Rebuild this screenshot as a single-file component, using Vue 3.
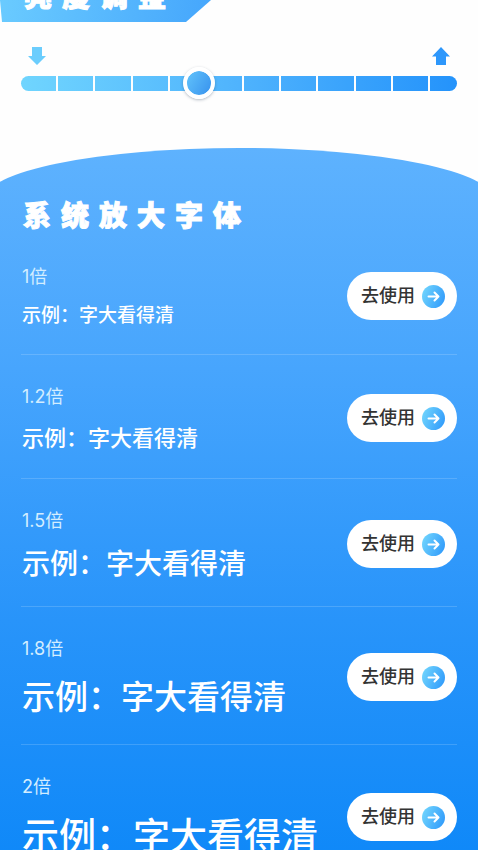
<script setup>
import { ref } from 'vue'

const brightness = ref(40)

const scales = [
  { id: 'x10', label: '1倍' },
  { id: 'x12', label: '1.2倍' },
  { id: 'x15', label: '1.5倍' },
  { id: 'x18', label: '1.8倍' },
  { id: 'x20', label: '2倍' }
]
</script>

<template>
  <main class="page">
    <header class="tab">
      <h2 id="brightness-title" class="heading">亮度调整</h2>
    </header>

    <section class="brightness">
      <div class="arrows">
        <svg class="arrow down" viewBox="0 0 18 18" aria-hidden="true">
          <path d="M4 0h10v9h4L9 18 0 9h4z" />
        </svg>
        <svg class="arrow up" viewBox="0 0 18 18" aria-hidden="true">
          <path d="M4 18h10V9.500h4L9 0 0 9.500h4z" />
        </svg>
      </div>
      <div class="slider">
        <div class="segments">
          <span v-for="n in 12" :key="n" class="segment"></span>
        </div>
        <input
          v-model="brightness"
          class="range"
          type="range"
          min="0"
          max="100"
          aria-labelledby="brightness-title"
        />
      </div>
    </section>

    <section class="panel">
      <h2 class="heading">系统放大字体</h2>
      <ul class="list">
        <li v-for="scale in scales" :key="scale.id" class="row">
          <div class="info">
            <span class="label">{{ scale.label }}</span>
            <span class="sample" :class="scale.id">示例：字大看得清</span>
          </div>
          <button class="use" type="button">
            <span>去使用</span>
            <svg class="go" viewBox="0 0 23 23" aria-hidden="true">
              <defs>
                <linearGradient :id="'go-' + scale.id" x1="0" y1="0.3" x2="1" y2="0.7">
                  <stop offset="0" stop-color="#6fd3fd" />
                  <stop offset="1" stop-color="#329cfb" />
                </linearGradient>
              </defs>
              <circle cx="11.5" cy="11.5" r="11.5" :fill="`url(#go-${scale.id})`" />
              <path class="stroke" d="M6.500 11.500h10M12.500 7.500l4 4-4 4" />
            </svg>
          </button>
        </li>
      </ul>
    </section>
  </main>
</template>

<style>
body {
  margin: 0;
  background: #fefefe;
}
</style>

<style scoped>
.page {
  overflow: hidden;
  font-family: Inter, "Noto Sans CJK SC", sans-serif;
  color: #fff;
}

.heading {
  margin: 0;
  font-size: 28px;
  line-height: 28px;
  font-weight: 900;
  letter-spacing: 10px;
  -webkit-text-stroke: 1px #fff;
}

.tab {
  display: flex;
  align-items: flex-end;
  box-sizing: border-box;
  width: fit-content;
  height: 22px;
  padding: 0 35px 11px 24px;
  background: linear-gradient(100deg, #6acbff, #45a6fc);
  clip-path: polygon(0 0, 100% 0, calc(100% - 25px) 100%, 2px 100%);
}

.brightness {
  padding: 25px 21px 49px;
}

.arrows {
  display: flex;
  justify-content: space-between;
  padding: 0 7px;
}

.arrow {
  width: 18px;
  height: 18px;
}

.down {
  fill: #6bcdfd;
}

.up {
  fill: #2d97fb;
}

.slider {
  display: grid;
  align-items: center;
  margin-top: 2px;
}

.segments,
.range {
  grid-area: 1 / 1;
}

.segments {
  display: grid;
  grid-template-columns: repeat(11, 37fr) 27fr;
  height: 15px;
  border-radius: 8px;
  overflow: hidden;
  background: linear-gradient(90deg, #70d5fe, #4fb3fd 50%, #2493fb);
}

.segment {
  border-right: 2px solid #fefefe;
}

.segment:last-child {
  border-right: 0;
}

.range {
  appearance: none;
  width: 100%;
  height: 32px;
  margin: 0;
  background: transparent;
}

.range::-webkit-slider-thumb {
  appearance: none;
  box-sizing: border-box;
  width: 32px;
  height: 32px;
  border: 4px solid #fff;
  border-radius: 50%;
  background: linear-gradient(120deg, #62c3fb, #3792ee) padding-box;
  box-shadow: 0 1px 3px rgba(40, 60, 90, 0.35);
}

.panel {
  position: relative;
  z-index: 0;
  padding: 54px 21px 0;
}

.panel .heading {
  padding-left: 2px;
}

/* Domed backdrop, wider than the page so the curve is cut by both edges */
.panel::before {
  content: "";
  position: absolute;
  z-index: -1;
  inset: 0 -16px;
  border-radius: 50% 50% 0 0 / 52px 52px 0 0;
  background: linear-gradient(180deg, #5eb2fe, #47a5fd 30%, #2894fa 64%, #0c87f8);
}

.list {
  margin: 5px 0 0;
  padding: 0;
  list-style: none;
}

.row {
  display: flex;
  align-items: center;
  justify-content: space-between;
  padding: 30px 0 27px;
  border-bottom: 1px solid rgba(255, 255, 255, 0.16);
}

.row:last-child {
  border-bottom: 0;
}

.info {
  display: flex;
  flex-direction: column;
  gap: 18px;
  padding: 2px 0 0 1px;
}

.label {
  font-size: 18px;
  line-height: 20px;
  color: #d3edff;
}

.sample {
  font-weight: 500;
  white-space: nowrap;
}

.x10 {
  font-size: 19px;
  line-height: 22px;
}

.x12 {
  font-size: 22px;
  line-height: 26px;
}

.x15 {
  font-size: 28px;
  line-height: 30px;
}

.x18 {
  font-size: 33px;
  line-height: 40px;
}

.x20 {
  font-size: 37px;
  line-height: 44px;
}

.use {
  display: flex;
  flex: none;
  align-items: center;
  gap: 7px;
  height: 48px;
  margin: 0;
  padding: 0 12px 0 14px;
  border: 0;
  border-radius: 24px;
  background: #fff;
  color: #333;
  font-family: inherit;
  font-size: 18px;
  font-weight: 500;
  line-height: 24px;
}

.go {
  width: 23px;
  height: 23px;
}

.stroke {
  fill: none;
  stroke: #fff;
  stroke-width: 2;
  stroke-linecap: round;
  stroke-linejoin: round;
}
</style>
